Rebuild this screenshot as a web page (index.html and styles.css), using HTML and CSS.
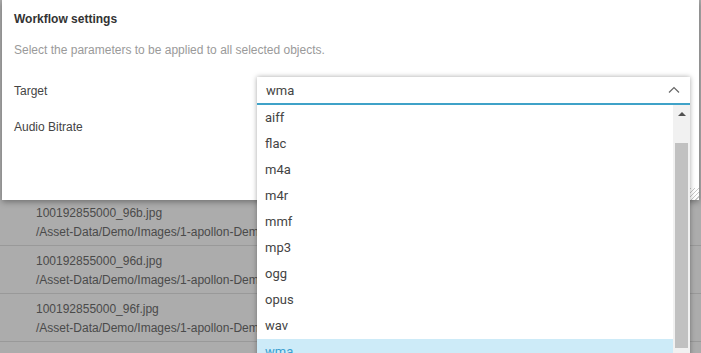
FILE: index.html
```html
<!DOCTYPE html>
<html lang="en">
  <head>
    <meta charset="UTF-8" />
    <meta name="viewport" content="width=device-width, initial-scale=1.0" />
    <title>Workflow settings</title>
    <link rel="stylesheet" href="styles.css">
  </head>
  <body>
    <!-- asset list behind the modal -->
    <div class="assets">
      <div class="asset-row">
        <div>100192855000_96b.jpg</div>
        <div>/Asset-Data/Demo/Images/1-apollon-Demo</div>
      </div>
      <div class="asset-row">
        <div>100192855000_96d.jpg</div>
        <div>/Asset-Data/Demo/Images/1-apollon-Demo</div>
      </div>
      <div class="asset-row">
        <div>100192855000_96f.jpg</div>
        <div>/Asset-Data/Demo/Images/1-apollon-Demo</div>
      </div>
    </div>

    <div class="modal">
      <div class="modal-title">Workflow settings</div>
      <div class="modal-hint">Select the parameters to be applied to all selected objects.</div>
      <div class="form">
        <div class="form-row">
          <label>Target</label>
        </div>
        <div class="form-row">
          <label>Audio Bitrate</label>
        </div>
      </div>
      <div class="resize-grip"></div>

      <div class="dropdown">
        <div class="dropdown-value">
          <span>wma</span>
          <svg width="12" height="8" viewBox="0 0 12 8">
            <path d="M1 6.5 L6 1.5 L11 6.5" fill="none" stroke="#666" stroke-width="1.2" />
          </svg>
        </div>
        <div class="dropdown-list">
          <ul class="options">
            <li>aiff</li>
            <li>flac</li>
            <li>m4a</li>
            <li>m4r</li>
            <li>mmf</li>
            <li>mp3</li>
            <li>ogg</li>
            <li>opus</li>
            <li>wav</li>
            <li class="selected">wma</li>
          </ul>
          <div class="scrollbar">
            <div class="scroll-arrow"></div>
            <div class="scroll-thumb"></div>
          </div>
        </div>
      </div>
    </div>
  </body>
</html>
```

FILE: styles.css
```css
html,
body {
  margin: 0;
  padding: 0;
  height: 100%;
  overflow: hidden;
}

body {
  font-family: "Liberation Sans", Arial, sans-serif;
  background-color: #acacac;
  color: #444;
  position: relative;
}

/* first rows sit under the modal */
.assets {
  padding-top: 198px;
}

.asset-row {
  height: 48px;
  box-sizing: border-box;
  padding: 6px 36px 0;
  border-bottom: 1px solid #999;
  font-size: 12px;
  line-height: 19px;
  color: #4a4a4a;
}

.modal {
  position: absolute;
  top: 0;
  left: 2px;
  width: 697px;
  height: 200px;
  background-color: #fff;
  box-shadow: 0 2px 6px rgba(0, 0, 0, 0.35);
}

.modal-title {
  padding: 12px 12px 0;
  font-size: 12px;
  font-weight: bold;
  line-height: 15px;
  color: #333;
}

.modal-hint {
  padding: 16px 12px 0;
  font-size: 12px;
  line-height: 14px;
  color: #9a9a9a;
}

.form {
  padding: 16px 12px 0;
}

.form-row {
  height: 36px;
  display: flex;
  align-items: center;
  font-size: 12px;
  color: #444;
}

.resize-grip {
  position: absolute;
  right: 0;
  bottom: 0;
  width: 12px;
  height: 12px;
  background: repeating-linear-gradient(135deg, transparent 0, transparent 2px, #c8c8c8 2px, #c8c8c8 3px);
}

.dropdown {
  position: absolute;
  top: 77px;
  left: 255px;
  width: 433px;
  font-family: Roboto, "Liberation Sans", sans-serif;
  font-size: 13px;
  color: #444;
  box-shadow: 0 0 5px rgba(0, 0, 0, 0.35);
  background-color: #fff;
}

.dropdown-value {
  height: 26px;
  display: flex;
  align-items: center;
  justify-content: space-between;
  padding: 0 10px 0 9px;
  border-bottom: 2px solid #3fa2c8;
}

.dropdown-list {
  display: flex;
  height: 280px;
}

.options {
  list-style: none;
  margin: 0;
  padding: 0;
  flex: 1;
}

.options li {
  height: 26px;
  line-height: 26px;
  padding-left: 8px;
}

.options li.selected {
  background-color: #cdebf8;
  color: #3a9fd0;
}

.scrollbar {
  width: 17px;
  background-color: #f1f1f1;
}

.scroll-arrow {
  margin: 7px auto 0;
  width: 0;
  height: 0;
  border-left: 4px solid transparent;
  border-right: 4px solid transparent;
  border-bottom: 4px solid #505050;
}

.scroll-thumb {
  margin: 27px 2px 0;
  height: 205px;
  background-color: #c1c1c1;
}
```
